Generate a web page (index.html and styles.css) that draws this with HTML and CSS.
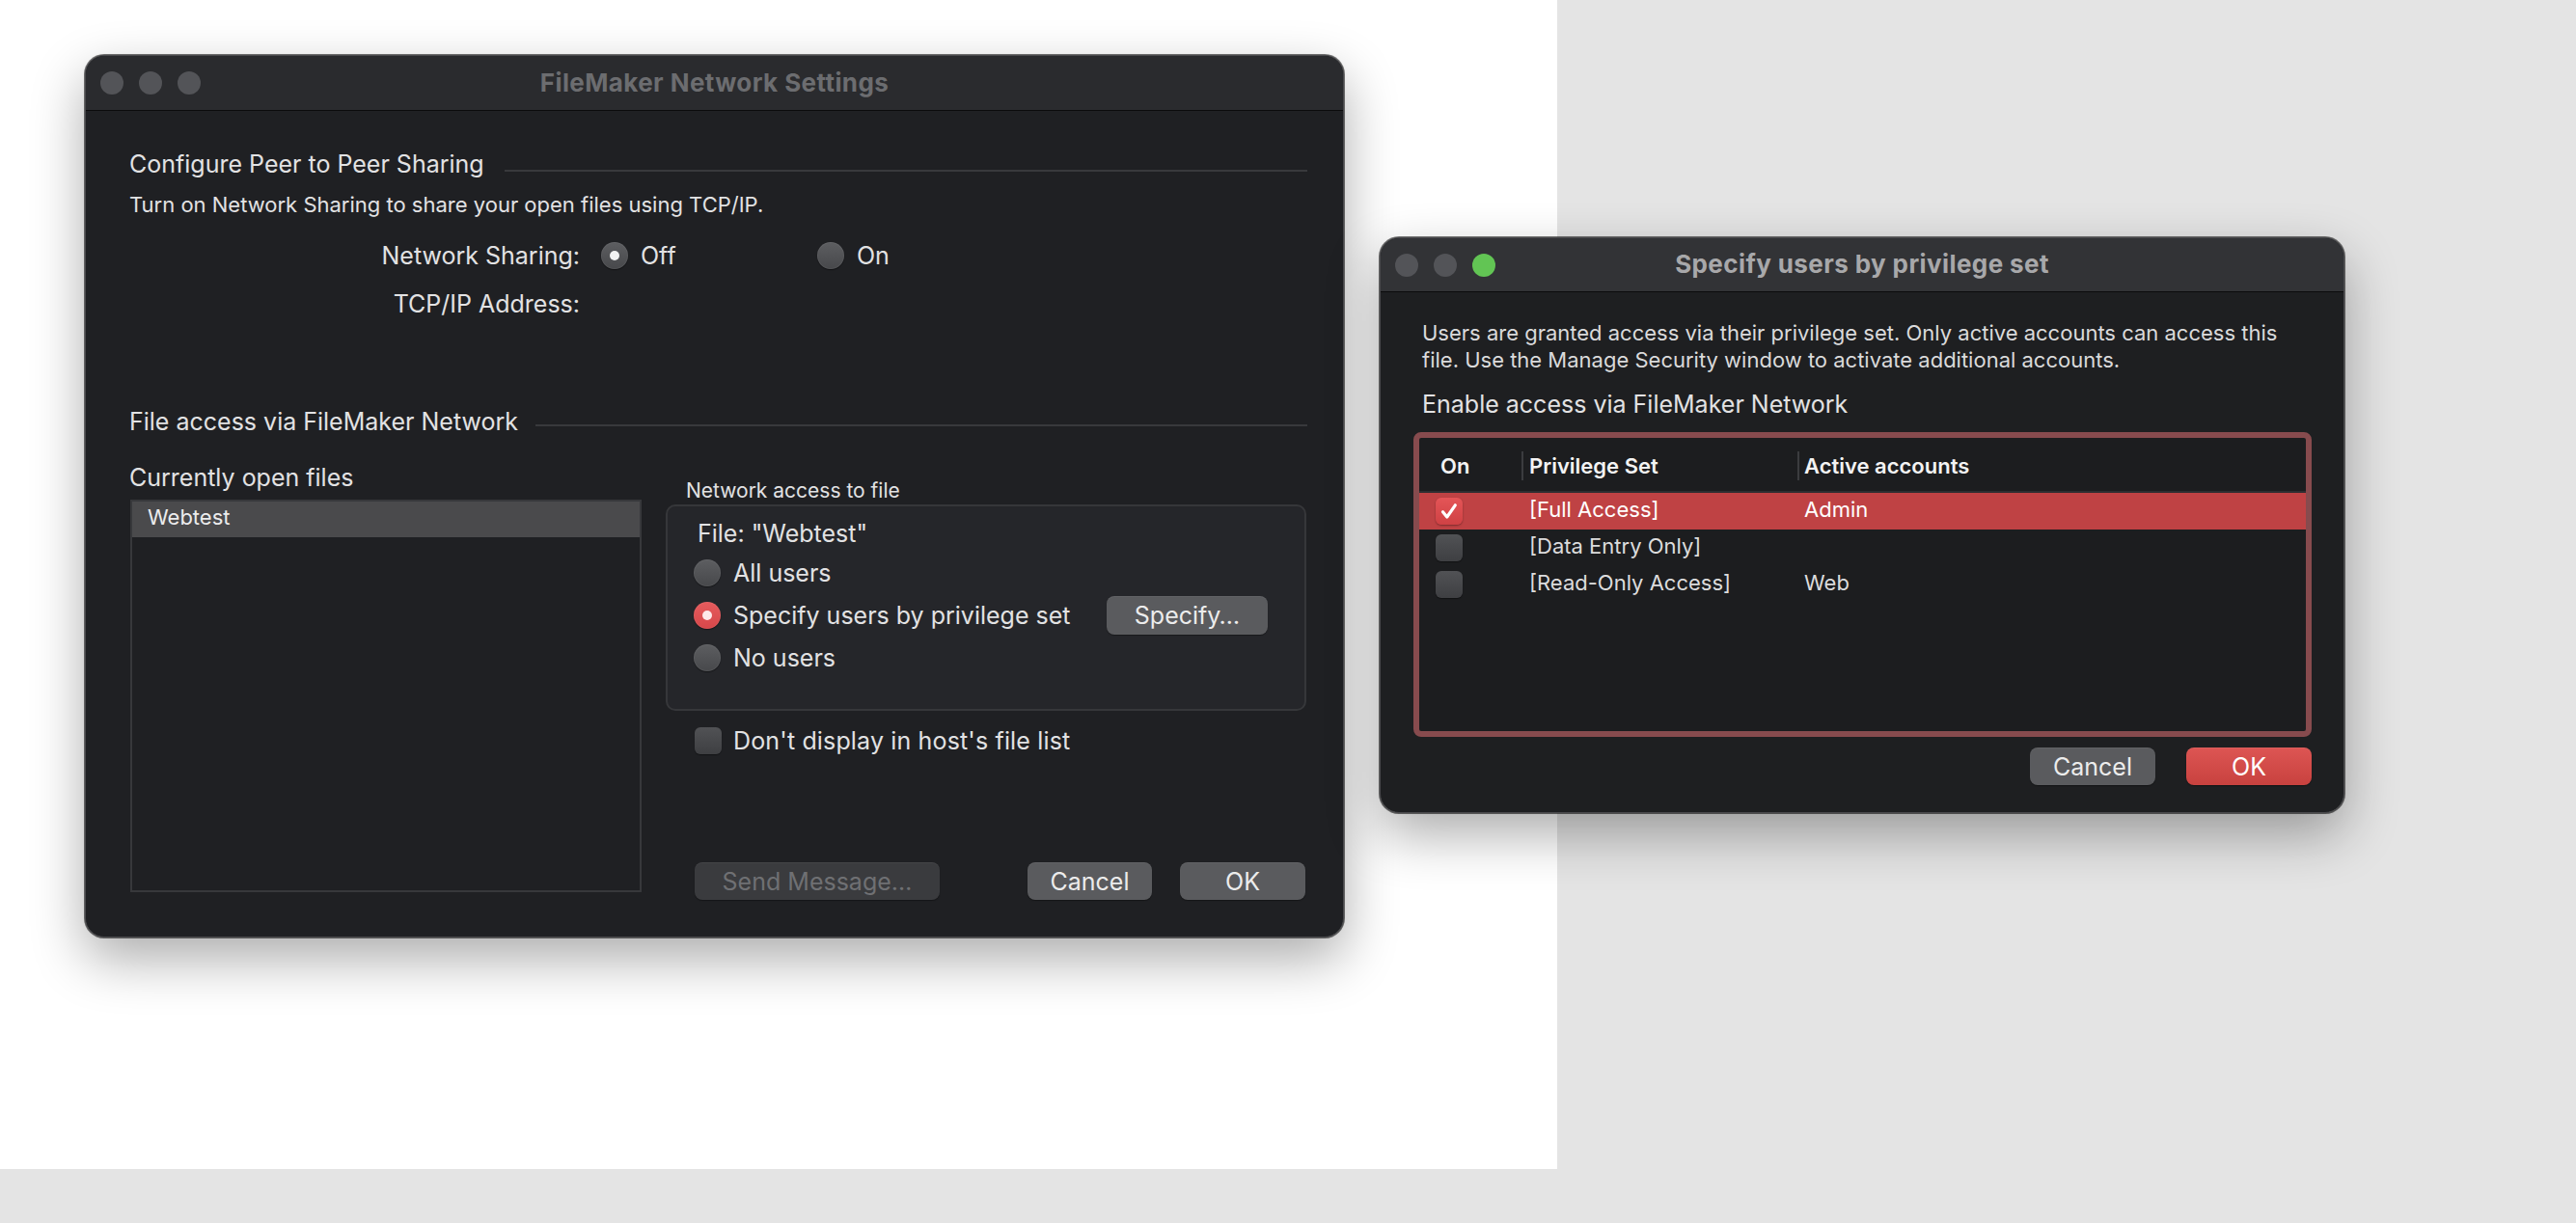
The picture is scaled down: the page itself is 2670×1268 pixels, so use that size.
FILE: index.html
```html
<!DOCTYPE html>
<html lang="en">
<head>
<meta charset="utf-8">
<title>FileMaker Network Settings</title>
<link rel="stylesheet" href="styles.css">
</head>
<body>
<div class="paper"></div>

<section class="window main-window">
  <header class="titlebar">
    <div class="lights"><span class="light"></span><span class="light"></span><span class="light"></span></div>
    <h1 class="title">FileMaker Network Settings</h1>
    <div></div>
  </header>
  <div class="main-body">
    <div class="section-head"><span>Configure Peer to Peer Sharing</span><i class="rule"></i></div>
    <p class="hint">Turn on Network Sharing to share your open files using TCP/IP.</p>
    <div class="form-row">
      <span class="form-label">Network Sharing:</span>
      <span class="option"><span class="radio radio-checked"></span>Off</span>
      <span class="option"><span class="radio"></span>On</span>
    </div>
    <div class="form-row form-row-tcp">
      <span class="form-label">TCP/IP Address:</span>
    </div>
    <div class="section-head section-head-2"><span>File access via FileMaker Network</span><i class="rule"></i></div>
    <div class="file-area">
      <div class="files-col">
        <div class="col-label">Currently open files</div>
        <div class="file-list">
          <div class="file-item selected">Webtest</div>
        </div>
      </div>
      <div class="access-col">
        <div class="group-label">Network access to file</div>
        <div class="group-box">
          <div class="file-name">File: "Webtest"</div>
          <div class="radio-row first"><span class="radio"></span>All users</div>
          <div class="radio-row"><span class="radio radio-red radio-checked"></span>Specify users by privilege set<button class="btn specify-btn">Specify…</button></div>
          <div class="radio-row"><span class="radio"></span>No users</div>
        </div>
        <div class="check-row"><span class="checkbox"></span>Don't display in host's file list</div>
        <div class="button-row">
          <button class="btn btn-disabled send-btn">Send Message…</button>
          <button class="btn cancel-btn">Cancel</button>
          <button class="btn ok-btn">OK</button>
        </div>
      </div>
    </div>
  </div>
</section>

<section class="window dialog">
  <header class="titlebar dialog-titlebar">
    <div class="lights"><span class="light"></span><span class="light"></span><span class="light light-green"></span></div>
    <h1 class="title dialog-title">Specify users by privilege set</h1>
    <div></div>
  </header>
  <div class="dialog-body">
    <p class="desc">Users are granted access via their privilege set. Only active accounts can access this<br>file. Use the Manage Security window to activate additional accounts.</p>
    <div class="enable-label">Enable access via FileMaker Network</div>
    <div class="table">
      <div class="trow thead">
        <div class="cell c-on">On</div>
        <div class="cell c-set sep">Privilege Set</div>
        <div class="cell c-acc sep">Active accounts</div>
      </div>
      <div class="trow tr selected">
        <div class="cell c-on"><span class="checkbox checkbox-on"><svg viewBox="0 0 28 28" width="28" height="28"><path d="M7.5 14.8 L11.8 20 L20.3 7.8" fill="none" stroke="#fff" stroke-width="3.2" stroke-linecap="round" stroke-linejoin="round"/></svg></span></div>
        <div class="cell c-set">[Full Access]</div>
        <div class="cell c-acc">Admin</div>
      </div>
      <div class="trow tr">
        <div class="cell c-on"><span class="checkbox"></span></div>
        <div class="cell c-set">[Data Entry Only]</div>
        <div class="cell c-acc"></div>
      </div>
      <div class="trow tr">
        <div class="cell c-on"><span class="checkbox"></span></div>
        <div class="cell c-set">[Read-Only Access]</div>
        <div class="cell c-acc">Web</div>
      </div>
    </div>
    <div class="dialog-buttons">
      <button class="btn dbtn">Cancel</button>
      <button class="btn dbtn btn-red">OK</button>
    </div>
  </div>
</section>
</body>
</html>
```

FILE: styles.css
```css
* { box-sizing: border-box; margin: 0; padding: 0; }
html, body { width: 2670px; height: 1268px; }
body {
  background: #e4e4e4;
  font-family: Inter, "Noto Sans", sans-serif;
  color: #e2e2e3;
  overflow: hidden;
  position: relative;
}
.paper { width: 1614px; height: 1212px; background: #ffffff; }

/* windows */
.window {
  position: absolute;
  background: #1f2023;
  border: 1px solid #4a4a4d;
  border-radius: 20px;
  box-shadow: 0 0 0 1px rgba(0,0,0,0.55), 0 22px 55px rgba(0,0,0,0.33);
  overflow: hidden;
  display: flex;
  flex-direction: column;
}
.main-window { left: 88px; top: 57px; width: 1305px; height: 915px; }
.dialog { left: 1430px; top: 246px; width: 1000px; height: 597px; background: #1e1f21; }

.titlebar {
  height: 57px;
  flex: none;
  background: #2a2b2e;
  border-bottom: 1px solid #0b0b0c;
  display: grid;
  grid-template-columns: 1fr auto 1fr;
  align-items: center;
}
.dialog-titlebar { background: #323336; height: 56px; }
.lights { display: flex; gap: 16px; padding-left: 15px; }
.light { width: 24px; height: 24px; border-radius: 50%; background: #535458; }
.light-green { background: #62c554; }
.title {
  font-size: 26px;
  font-weight: 700;
  color: #6c6d70;
  letter-spacing: 0.4px;
  white-space: nowrap;
  padding-bottom: 2px;
}
.dialog-title { color: #a8a8aa; }

/* main body */
.main-body { padding: 38px 37px 0 45px; }
.section-head { display: flex; align-items: center; height: 34px; font-size: 25px; }
.section-head .rule { flex: 1; height: 2px; background: #38393c; margin-left: 21px; margin-top: 13px; }
.section-head-2 { margin-top: 87px; }
.section-head-2 .rule { margin-left: 18px; margin-top: 8px; }
.hint { font-size: 22px; line-height: 30px; margin-top: 10px; }

.form-row { display: flex; align-items: center; height: 36px; margin-top: 20px; font-size: 25px; }
.form-row-tcp { margin-top: 14px; }
.form-label { width: 467px; text-align: right; }
.option { display: flex; align-items: center; width: 224px; }
.form-label + .option { margin-left: 22px; }

.radio {
  width: 28px; height: 28px; flex: none;
  border-radius: 50%;
  background: linear-gradient(#5d5e61, #47484b);
  box-shadow: inset 0 0 0 1px rgba(255,255,255,0.05), 0 1px 1px rgba(0,0,0,0.45);
  display: inline-grid; place-items: center;
  margin-right: 13px;
}
.radio-checked::after { content: ""; width: 10px; height: 10px; border-radius: 50%; background: #f2f2f2; }
.radio-red { background: linear-gradient(#e65b5d, #d6474a); }
.radio-red::after { background: #fde8e9; }

.file-area { display: flex; align-items: flex-start; margin-top: 26px; }
.files-col { width: 531px; flex: none; }
.col-label { font-size: 25px; line-height: 30px; }
.file-list {
  margin-top: 8px; margin-left: 1px;
  height: 407px;
  border: 2px solid #37383b;
  background: #1f2023;
}
.file-item { height: 37px; line-height: 32px; padding-bottom: 5px; font-size: 22px; padding-left: 16px; }
.file-item.selected { background: #4a4a4c; color: #ececec; }

.access-col { width: 664px; margin-left: 25px; padding-top: 16px; }
.group-label { font-size: 21px; line-height: 26px; padding-left: 21px; }
.group-box {
  margin-top: 1px;
  height: 214px;
  border: 2px solid #36373a;
  border-radius: 10px;
  background: #25262a;
  padding: 13px 38px 0 27px;
}
.file-name { font-size: 25px; line-height: 30px; padding-left: 4px; }
.radio-row { display: flex; align-items: center; height: 44px; font-size: 25px; }
.radio-row.first { margin-top: 4px; }

.btn {
  font-family: inherit;
  border: none;
  border-radius: 8px;
  background: #5a5b5e;
  color: #ececec;
  font-size: 25px;
  height: 39px;
  box-shadow: 0 1px 1px rgba(0,0,0,0.35), inset 0 1px 0 rgba(255,255,255,0.05);
}
.specify-btn { margin-left: auto; width: 167px; height: 40px; }
.btn-disabled { background: #3a3b3e; color: #6f7073; }

.check-row { display: flex; align-items: center; height: 36px; margin-top: 13px; padding-left: 30px; font-size: 25px; letter-spacing: 0.15px; }
.checkbox {
  width: 28px; height: 28px; flex: none;
  border-radius: 6px;
  background: linear-gradient(#515255, #3e3f42);
  box-shadow: 0 1px 1px rgba(0,0,0,0.4);
  margin-right: 12px;
  display: inline-grid; place-items: center;
}
.checkbox-on { background: linear-gradient(#e45557, #cf4144); box-shadow: 0 1px 2px rgba(0,0,0,0.35); }

.button-row { display: flex; margin-top: 108px; padding-left: 30px; padding-right: 1px; }
.send-btn { width: 254px; }
.cancel-btn { width: 129px; margin-left: auto; }
.ok-btn { width: 130px; margin-left: 29px; }

/* dialog */
.dialog-body { padding: 28px 33px 0 34px; }
.desc { font-size: 22px; line-height: 28px; margin-left: 9px; color: #dadadb; }
.enable-label { font-size: 25px; line-height: 32px; margin-top: 16px; margin-left: 9px; }
.table {
  margin-top: 13px;
  width: 931px; height: 316px;
  border: 6px solid #874b4e;
  border-radius: 8px;
  background: #1c1d1f;
}
.trow { display: grid; grid-template-columns: 106px 286px 1fr; align-items: center; }
.thead { padding: 14px 0 11px; border-bottom: 2px solid #2d2e31; font-size: 22px; font-weight: 600; color: #f3f3f3; }
.thead .cell { height: 30px; display: flex; align-items: center; }
.thead .c-on { padding-left: 22px; }
.thead .sep { border-left: 2px solid #3b3c3f; padding-left: 6px; }
.thead .c-acc { padding-left: 5px; }
.tr { height: 38px; font-size: 22px; color: #dcdcdd; }
.tr .cell { display: flex; align-items: center; height: 38px; }
.tr .c-set, .tr .c-acc { padding-bottom: 5px; }
.tr .c-on { padding-left: 17px; }
.tr .c-set { padding-left: 8px; }
.tr .c-acc { padding-left: 7px; }
.tr.selected { background: #bf4244; color: #ffffff; }
.tr .checkbox { margin-right: 0; }

.dialog-buttons { display: flex; justify-content: flex-end; gap: 32px; margin-top: 11px; }
.dbtn { width: 130px; }
.btn-red { background: linear-gradient(#dd5553, #c8423f); color: #ffffff; }
```
